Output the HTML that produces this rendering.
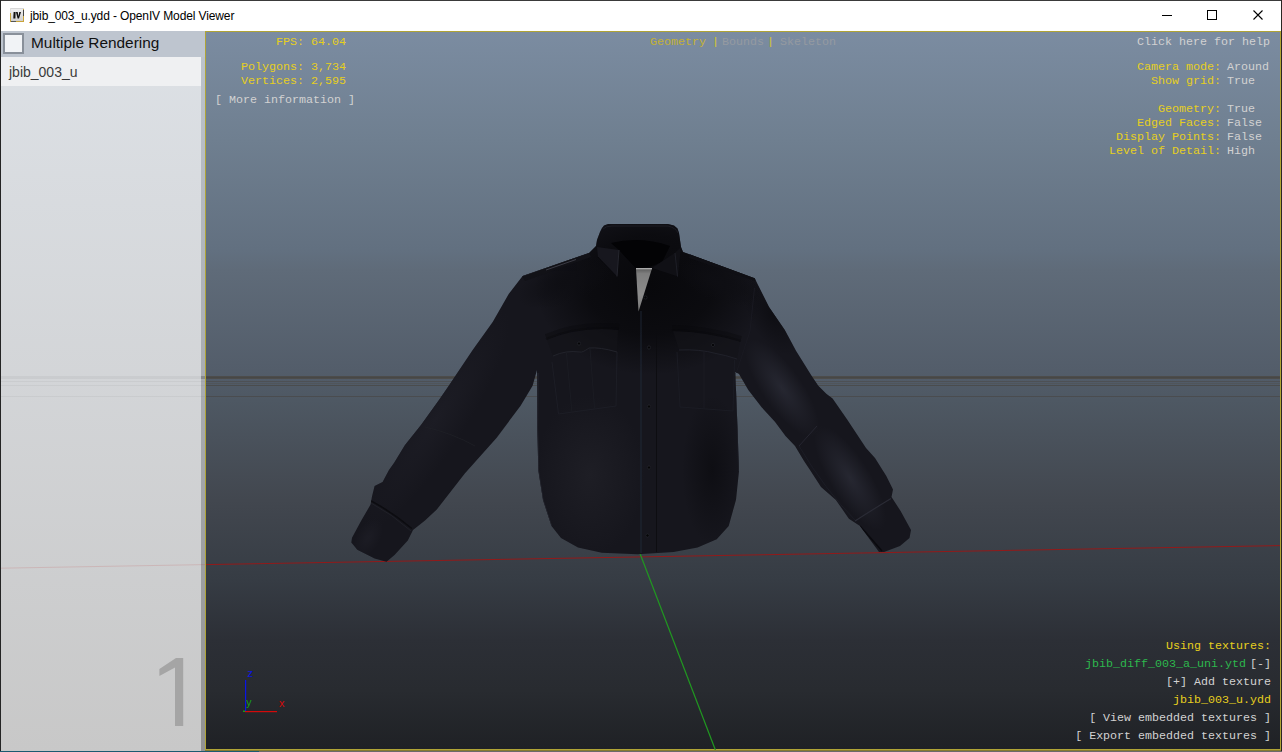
<!DOCTYPE html>
<html><head><meta charset="utf-8">
<style>
*{margin:0;padding:0;box-sizing:border-box}
html,body{width:1282px;height:752px;overflow:hidden;background:#fff}
body{position:relative;font-family:"Liberation Sans",sans-serif}
.abs{position:absolute}
#topline{left:0;top:0;width:1282px;height:1px;background:#3a3a3a}
#leftline{left:0;top:0;width:1px;height:752px;background:#242424}
#rightline{left:1281px;top:0;width:1px;height:752px;background:#2a2624}
#botline{left:0;top:751px;width:1282px;height:1px;background:linear-gradient(90deg,#1b5a70 259px,#6a6a6a 259px)}
#title{left:30px;top:9px;font-size:12px;letter-spacing:-0.12px;color:#000;white-space:nowrap}
#panel{left:1px;top:31px;width:204px;height:720px;background:linear-gradient(#dde1e6,#c8c8c8)}
#strip{left:201px;top:31px;width:4px;height:720px;background:linear-gradient(#bec5ce,#929292)}
#phead{left:1px;top:31px;width:204px;height:26px;background:#bec5cf}
#chk{left:3px;top:33px;width:21px;height:21px;border:2px solid #89909a;background:#f1f3f6}
#mr{left:31px;top:34px;font-size:15.4px;color:#111;white-space:nowrap}
#item{left:1px;top:57px;width:200px;height:29px;background:#eff0f2}
#itemt{left:9px;top:64px;font-size:14px;color:#3a3a3a;white-space:nowrap}
#vp{left:205px;top:31px;width:1076px;height:719px;border:1px solid #b0a436;
 background:linear-gradient(#7b8ca1 0px,#6f7f90 108px,#627080 218px,#5f6b79 238px,#535d6a 338px,#4e5863 368px,#42474f 468px,#363c44 548px,#2c2f36 608px,#282b30 658px,#1f2125 717px)}
.m{position:absolute;font-family:"Liberation Mono",monospace;font-size:11.67px;line-height:14px;white-space:pre}
.y{color:#e6cf1e}.w{color:#d2d2d2}.g{color:#2db84d}
</style></head><body>
<div id="topline" class="abs"></div>
<div id="title" class="abs">jbib_003_u.ydd - OpenIV Model Viewer</div>
<div id="panel" class="abs"></div>
<div id="strip" class="abs"></div>
<div id="phead" class="abs"></div>
<svg class="abs" style="left:0;top:0" width="206" height="752">
<g opacity="0.06"><rect x="1" y="376" width="204" height="3" fill="#4c4c4b"/><rect x="1" y="381" width="204" height="1" fill="#4d5054"/><rect x="1" y="385" width="204" height="1" fill="#4a4c4d"/><rect x="1" y="396" width="204" height="1" fill="#4a4c4f"/></g>
<rect x="201" y="376" width="4" height="3" fill="#4c4c4b" opacity="0.3"/>
<line x1="1" y1="568.2" x2="205" y2="564.6" stroke="#c01010" stroke-width="1" opacity="0.12"/>
</svg>
<div id="chk" class="abs"></div>
<div id="mr" class="abs">Multiple Rendering</div>
<div id="item" class="abs"></div>
<div id="itemt" class="abs">jbib_003_u</div>
<svg class="abs" style="left:0;top:0" width="210" height="752"><path d="M176,658 L183.2,658 L183.2,726 L175,726 L175,667.5 L159.4,676 L159.4,669 Z" fill="#a5a5a5"/></svg>
<div id="vp" class="abs"></div>
<svg class="abs" style="left:0;top:0" width="1282" height="752" viewBox="0 0 1282 752">
<g id="horizon">
<rect x="206" y="376" width="1074" height="3" fill="#4c4c4b"/>
<rect x="206" y="377" width="1074" height="1" fill="#474746"/>
<rect x="206" y="381" width="1074" height="1" fill="#4d5054"/>
<rect x="206" y="383" width="1074" height="1" fill="#50555a"/>
<rect x="206" y="385" width="1074" height="1" fill="#4a4c4d"/>
<rect x="206" y="396" width="1074" height="1" fill="#4a4c4f"/>
</g>
<line x1="206" y1="564.6" x2="1280" y2="545.6" stroke="#921a1a" stroke-width="1"/>
<line x1="639.4" y1="552" x2="715.4" y2="750" stroke="#209820" stroke-width="1.2"/>

</svg>
<!--SHIRT-->
<svg class="abs" style="left:0;top:0" width="1282" height="752">
<defs>
<clipPath id="sil"><path d="M602.0,228.0 L604.0,225.5 L608.0,224.0 L668.0,224.0 L674.0,225.5 L677.5,228.5 L679.0,233.0 L681.0,247.0 L683.0,252.0 L690.0,254.4 L754.7,278.3 L757.0,283.0 L769.0,307.0 L784.8,330.0 L796.0,350.7 L811.9,376.3 L818.3,385.8 L826.3,393.8 L832.6,398.6 L847.0,419.3 L866.0,448.0 L875.0,457.9 L886.3,476.0 L893.0,489.5 L891.5,497.0 L900.6,511.0 L911.0,530.0 L909.5,538.0 L900.0,546.0 L884.0,552.0 L879.0,552.0 L860.0,526.0 L848.9,518.7 L835.9,500.0 L821.0,487.0 L810.0,470.0 L804.0,461.0 L795.0,446.0 L785.5,436.0 L774.9,421.8 L761.6,407.2 L748.3,390.0 L739.0,374.0 L735.3,372.0 L737.5,428.0 L739.0,471.0 L736.0,499.7 L728.7,526.0 L716.7,539.2 L697.6,547.6 L673.6,552.0 L637.7,554.3 L601.8,552.8 L578.0,547.6 L561.0,538.0 L551.5,526.0 L543.0,500.0 L538.4,471.0 L537.2,428.0 L537.0,370.0 L532.6,385.8 L520.6,405.7 L496.7,437.7 L464.8,473.6 L436.8,509.5 L425.0,520.5 L413.0,530.0 L407.8,540.5 L394.5,555.0 L386.5,561.8 L374.6,558.4 L357.3,549.8 L351.3,542.5 L352.0,537.8 L361.3,520.5 L370.6,504.6 L372.0,496.6 L374.6,486.0 L382.6,482.0 L389.0,470.0 L394.0,463.0 L405.0,445.0 L421.0,425.0 L439.0,400.0 L448.8,385.8 L472.7,350.0 L492.7,322.0 L508.7,294.0 L522.6,276.0 L589.0,253.0 L596.0,246.0 L597.0,240.0 L600.0,232.0 Z"/></clipPath>
</defs>
<g clip-path="url(#sil)">
<defs>
<radialGradient id="rg_dark"><stop offset="0" stop-color="#08080b" stop-opacity="1"/><stop offset="0.55" stop-color="#08080b" stop-opacity="0.75"/><stop offset="1" stop-color="#08080b" stop-opacity="0"/></radialGradient>
<radialGradient id="rg_hiR"><stop offset="0" stop-color="#262731" stop-opacity="1"/><stop offset="1" stop-color="#262731" stop-opacity="0"/></radialGradient>
<radialGradient id="rg_hiL"><stop offset="0" stop-color="#1c1c24" stop-opacity="1"/><stop offset="1" stop-color="#1c1c24" stop-opacity="0"/></radialGradient>
<radialGradient id="rg_hiT"><stop offset="0" stop-color="#1e1e25" stop-opacity="1"/><stop offset="1" stop-color="#1e1e25" stop-opacity="0"/></radialGradient>
<radialGradient id="rg_dk2"><stop offset="0" stop-color="#0e0e13" stop-opacity="1"/><stop offset="1" stop-color="#0e0e13" stop-opacity="0"/></radialGradient>
<linearGradient id="lg_us" x1="0" y1="0" x2="0" y2="1"><stop offset="0" stop-color="#5a5a5a"/><stop offset="0.12" stop-color="#7e7e7e"/><stop offset="0.6" stop-color="#8c8c8c"/><stop offset="1" stop-color="#7a7a7a"/></linearGradient>
</defs>
<rect x="340" y="215" width="580" height="350" fill="#16161d"/>
<ellipse cx="650" cy="285" rx="115" ry="90" fill="url(#rg_dark)"/>
<ellipse cx="0" cy="0" rx="58" ry="20" fill="url(#rg_hiR)" transform="translate(782,388) rotate(55)"/>
<ellipse cx="0" cy="0" rx="45" ry="22" fill="url(#rg_dk2)" transform="translate(772,315) rotate(60)"/>
<ellipse cx="0" cy="0" rx="60" ry="20" fill="url(#rg_hiR)" transform="translate(850,478) rotate(58)"/>
<ellipse cx="0" cy="0" rx="130" ry="30" fill="url(#rg_hiL)" transform="translate(435,420) rotate(-57)"/>
<ellipse cx="590" cy="475" rx="55" ry="80" fill="url(#rg_hiT)"/>
<ellipse cx="712" cy="470" rx="30" ry="75" fill="url(#rg_dk2)"/>
<!-- collar interior -->
<path d="M603,229 Q606,226 612,226 L668,226 Q676,228 678,233" stroke="#1c1c24" stroke-width="1" fill="none"/>
<path d="M611,243 Q640,236 670,246 L662,262 Q648,268.5 636,268.5 L619,250 Z" fill="#030305"/>
<path d="M597,247 L619,250 L617,276.5 L598,257 Z" fill="#17171e"/>
<path d="M619,250 L617,276.5" stroke="#25262e" stroke-width="1" fill="none"/>
<path d="M598,257 L616,276" stroke="#0a0a0e" stroke-width="1" fill="none"/>
<path d="M652,268 L675,252.7 L681,247 L678,276.5 Z" fill="#101015"/>
<path d="M675,253 L677.5,276.5" stroke="#1e1f27" stroke-width="1" fill="none"/>
<!-- undershirt -->
<path d="M636,268.5 L652,268.5 L638.5,311.5 Z" fill="url(#lg_us)"/>
<rect x="636" y="268" width="16" height="1.3" fill="#c8c8c8" opacity="0.8"/>
<!-- epaulettes -->
<ellipse cx="0" cy="0" rx="50" ry="22" fill="url(#rg_dk2)" transform="translate(565,282) rotate(-20)"/>
<ellipse cx="0" cy="0" rx="45" ry="20" fill="url(#rg_dk2)" transform="translate(720,282) rotate(20)"/>
<path d="M522,276 L589,252.5 L591,257 L525,281 Z" fill="#121217"/><path d="M522,276 L589,252.5" stroke="#26262e" stroke-width="1"/>
<path d="M546,270 L576,259.5" stroke="#7a7a88" stroke-width="0.9" opacity="0.45"/>
<path d="M690,253.5 L757,276.5 L755,281 L689,258 Z" fill="#0f0f14"/><path d="M690,253.5 L757,276.5" stroke="#24242c" stroke-width="1"/>
<!-- placket -->
<path d="M641,311 L641,553" stroke="#243040" stroke-width="1" opacity="0.75"/>
<path d="M656.5,330 L656.5,552" stroke="#0c0c10" stroke-width="1" opacity="0.8"/>
<!-- pockets left -->
<path d="M546,337 Q580,323 619,327" stroke="#08080b" stroke-width="6" fill="none" opacity="0.35"/><path d="M546,339 Q580,325 619,329" stroke="#08080b" stroke-width="2" fill="none" opacity="0.35"/>
<path d="M672,328 Q710,329 741,339" stroke="#08080b" stroke-width="6" fill="none" opacity="0.35"/><path d="M672,330 Q710,331 741,341" stroke="#08080b" stroke-width="2" fill="none" opacity="0.35"/>
<path d="M547,340 Q580,326 618,330 L617,352 Q600,347 589,348 Q582,353 580,352 Q566,350 553,356 Z" fill="#141419" opacity="0.6"/>
<path d="M553,356 Q566,350 580,352 Q582,353 589,348 Q600,347 617,352" stroke="#22232b" stroke-width="1" fill="none"/>
<path d="M552,362 L558.5,414 L616,406 L617,352" stroke="#1d1e26" stroke-width="1" fill="none"/>
<path d="M566.5,353 L572,413 M590,349 L594.5,408" stroke="#1b1c23" stroke-width="1" fill="none"/>
<!-- pockets right -->
<path d="M673,331 Q710,332 740,342 L737,359 Q725,355 716,353.5 Q700,349 679,350 Z" fill="#141419" opacity="0.6"/>
<path d="M679,350 Q700,349 716,353.5 Q725,355 737,359" stroke="#20212a" stroke-width="1" fill="none"/>
<path d="M677,352 L680,407 L733,411 L734.5,360" stroke="#1b1c24" stroke-width="1" fill="none"/>
<path d="M704,351 L704,408" stroke="#1a1b22" stroke-width="1" fill="none"/>
<!-- buttons -->
<g fill="#050507" stroke="#2a2b33" stroke-width="0.6"><circle cx="579" cy="343.5" r="1.6"/><circle cx="713" cy="345" r="1.6"/><circle cx="645.5" cy="297.5" r="1.6"/><circle cx="649" cy="347.5" r="1.6"/><circle cx="649" cy="406.5" r="1.6"/><circle cx="649" cy="467.5" r="1.6"/><circle cx="647.5" cy="535.5" r="1.6"/></g>
<!-- torso side edges -->
<path d="M538,373 L537.5,428 L538.5,471 L543,500 L551.5,526" stroke="#23242d" stroke-width="1.2" fill="none"/>
<path d="M736,373 L737.5,428 L738.5,471" stroke="#1c1d25" stroke-width="1" fill="none"/>
<!-- elbow creases -->
<path d="M425,427 Q452,433 475,446" stroke="#1f2027" stroke-width="1" fill="none" opacity="0.8"/>
<path d="M799,446 L817,426" stroke="#2a2b36" stroke-width="1" fill="none" opacity="0.8"/><path d="M799,446 Q825,490 856,521" stroke="#1e1f28" stroke-width="1" fill="none" opacity="0.8"/><path d="M754.5,288 L750,331 L736,374" stroke="#1a1a22" stroke-width="1" fill="none"/>
<!-- cuffs -->
<path d="M370.6,500.6 Q392,512 411.8,528.5" stroke="#0c0c10" stroke-width="1.5" fill="none"/><path d="M371,503 Q392,514 411,531" stroke="#202128" stroke-width="1" fill="none"/><ellipse cx="0" cy="0" rx="22" ry="12" fill="url(#rg_hiL)" transform="translate(368,538) rotate(-60)"/>
<path d="M855,521 Q872,510 891,498.5" stroke="#2a2b35" stroke-width="1.2" fill="none"/><path d="M860,526 L882,551" stroke="#0a0a0e" stroke-width="1.5" fill="none"/>

</g>
</svg>
<!--/SHIRT-->
<div class="m y" style="left:276px;top:35px">FPS: 64.04</div>
<div class="m y" style="left:241px;top:60px">Polygons: 3,734</div>
<div class="m y" style="left:241px;top:74px">Vertices: 2,595</div>
<div class="m w" style="left:215px;top:93px">[ More information ]</div>
<div class="m w" style="left:1137px;top:35px">Click here for help</div>
<div class="m" style="left:1109px;top:60px;text-align:right;width:112px"><span class="y">Camera mode:</span>
<span class="y">Show grid:</span>

<span class="y">Geometry:</span>
<span class="y">Edged Faces:</span>
<span class="y">Display Points:</span>
<span class="y">Level of Detail:</span></div>
<div class="m w" style="left:1227px;top:60px">Around
True

True
False
False
High</div>

<div class="m" style="left:650px;top:35px;color:#c4b234">Geometry</div>
<div class="m" style="left:712px;top:35px;color:#d8c82a">|</div>
<div class="m" style="left:722px;top:35px;color:#959aa1">Bounds</div>
<div class="m" style="left:767px;top:35px;color:#d8c82a">|</div>
<div class="m" style="left:780px;top:35px;color:#959aa1">Skeleton</div>
<div class="m" style="right:11px;top:637px;text-align:right;line-height:18px"><span class="y">Using textures:</span>
<span class="g">jbib_diff_003_a_uni.ytd</span><span class="w" style="letter-spacing:0">  </span><span class="w" style="margin-left:-10px">[-]</span>
<span class="w">[+] Add texture</span>
<span class="y">jbib_003_u.ydd</span>
<span class="w">[ View embedded textures ]</span>
<span class="w">[ Export embedded textures ]</span></div>
<svg class="abs" style="left:0;top:0" width="1282" height="752">
<rect x="245" y="680" width="1.2" height="32" fill="#0a14e6"/>
<rect x="245" y="711" width="32" height="1.2" fill="#d40a0a"/>
<rect x="243" y="710.5" width="2" height="1.5" fill="#1a9a1a"/>
<text x="247.5" y="676.5" font-family="Liberation Sans" font-size="11" fill="#0a14e6">z</text>
<text x="246" y="706" font-family="Liberation Sans" font-size="11" fill="#18a018">y</text>
<text x="279" y="707" font-family="Liberation Sans" font-size="11" fill="#d40a0a">x</text>
<rect x="1162" y="15" width="10" height="1" fill="#000"/>
<rect x="1207.5" y="10.5" width="9" height="9" fill="none" stroke="#000" stroke-width="1"/>
<path d="M1253.5,10.5 L1262.5,19.5 M1262.5,10.5 L1253.5,19.5" stroke="#000" stroke-width="1.1"/>
<defs><linearGradient id="ig" x1="0" y1="0" x2="0" y2="1"><stop offset="0" stop-color="#f0f0f0"/><stop offset="1" stop-color="#d0d0d0"/></linearGradient></defs>
<rect x="10" y="8" width="14" height="14" fill="#c9a43a"/>
<rect x="10" y="8" width="14" height="1" fill="#d8d8d8"/>
<rect x="10" y="8" width="1" height="5" fill="#e0e0e0"/>
<rect x="23" y="10" width="1" height="6" fill="#444"/>
<rect x="11" y="21" width="5" height="1" fill="#555"/>
<rect x="11" y="9" width="12" height="12" fill="url(#ig)"/>
<path d="M13.6,12 L15.6,12 L15.4,18.6 L13.3,18.6 Z" fill="#111"/>
<path d="M15.9,12 L17.7,12 L18.5,16.2 L19.3,12 L21,12 L19,18.6 L17.6,18.6 Z" fill="#111"/>
</svg>
<div class="abs" style="left:205px;top:750px;width:1076px;height:1px;background:#857a30"></div>
<div id="leftline" class="abs"></div>
<div id="rightline" class="abs"></div>
<div id="botline" class="abs"></div>
</body></html>
